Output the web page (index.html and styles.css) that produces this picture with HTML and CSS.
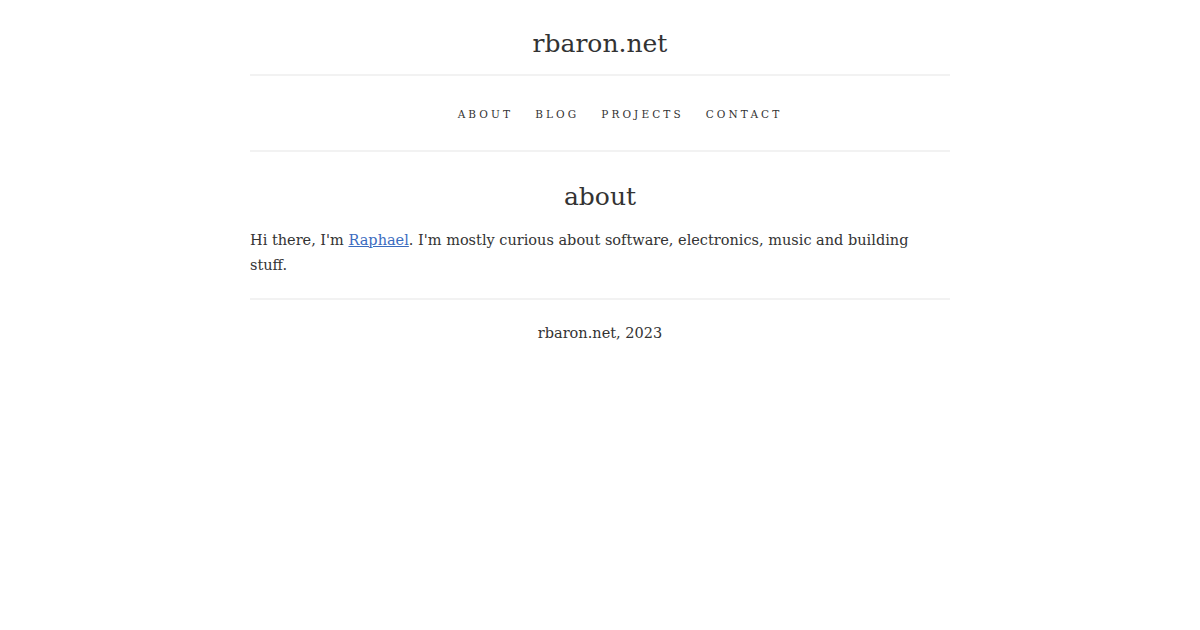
FILE: index.html
```html
<!DOCTYPE html>
<html>
<head>
<meta charset="utf-8">
<link rel="stylesheet" href="styles.css">
</head>
<body>
<div class="wrap">
  <header class="site-header">
    <h1 class="site-title">rbaron.net</h1>
  </header>
  <nav class="nav">
    <a href="#">About</a>
    <a href="#">Blog</a>
    <a href="#">Projects</a>
    <a href="#">Contact</a>
  </nav>
  <main class="content">
    <h2 class="page-title">about</h2>
    <p class="intro">Hi there, I'm <a class="link" href="#">Raphael</a>. I'm mostly curious about software, electronics, music and building stuff.</p>
  </main>
  <footer class="footer">rbaron.net, 2023</footer>
</div>
</body>
</html>
```
FILE: styles.css
```css
html, body {
  margin: 0;
  padding: 0;
  background: #fff;
}
body {
  font-family: "DejaVu Serif", "Liberation Serif", serif;
  color: #333;
}
.wrap {
  width: 700px;
  margin: 0 auto;
}
.site-header {
  border-bottom: 2px solid #f2f2f2;
  text-align: center;
  padding: 26px 0 12px;
}
.site-title {
  margin: 0;
  font-size: 25px;
  font-weight: normal;
  line-height: 36px;
  color: #333;
}
.nav {
  display: flex;
  justify-content: center;
  gap: 22px;
  padding: 30px 0 28px 40px;
  border-bottom: 2px solid #f2f2f2;
  line-height: 16px;
}
.nav a {
  text-transform: uppercase;
  font-size: 10.5px;
  letter-spacing: 3.1px;
  color: #333;
  text-decoration: none;
}
.content {
  border-bottom: 2px solid #f2f2f2;
  padding-bottom: 20px;
}
.page-title {
  margin: 0;
  padding-top: 27px;
  text-align: center;
  font-size: 25px;
  font-weight: normal;
  line-height: 36px;
}
.intro {
  margin: 13px 0 0;
  font-size: 14.5px;
  line-height: 25px;
}
.link {
  color: #3b6cbf;
}
.footer {
  text-align: center;
  font-size: 14.5px;
  line-height: 25px;
  padding-top: 21px;
}
```
